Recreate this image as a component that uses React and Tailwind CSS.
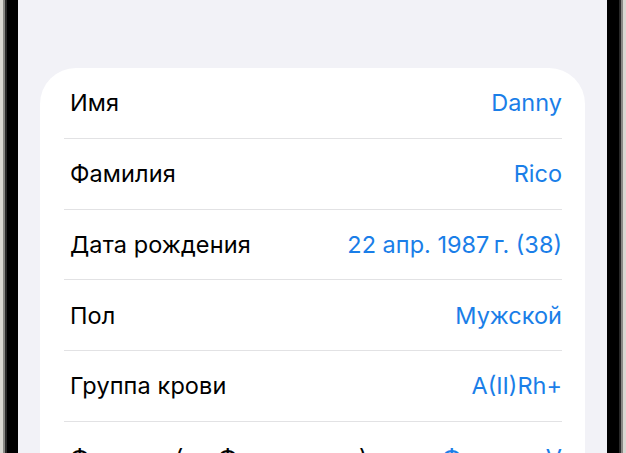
import React from "react";

const rows = [
  ["Имя", "Danny"],
  ["Фамилия", "Rico"],
  ["Дата рождения", "22 апр. 1987\u2009г. (38)"],
  ["Пол", "Мужской"],
  ["Группа крови", "A(II)Rh+"],
  ["Фототип (по Фицпатрику)", "Фототип V"],
];

export default function App() {
  return (
    <div
      className="flex w-[626px] h-[453px] overflow-hidden"
      style={{ fontFamily: "Inter, 'Noto Sans', sans-serif" }}
    >
      <div className="w-[18px] h-full flex shrink-0">
        <div className="w-[3px] bg-[#d9d8d2]" />
        <div className="w-[2px] bg-[#8a8a86]" />
        <div className="w-[2px] bg-[#2a2a2a]" />
        <div className="flex-1 bg-black" />
      </div>
      <div className="flex-1 bg-[#f2f2f7] pt-[68px] px-[22px]">
        <div className="bg-white rounded-[36px] pl-[24px] pr-[23px]">
          {rows.map(([label, value], i) => (
            <div
              key={i}
              className={
                "h-[70.75px] pt-[1px] flex items-center justify-between box-border " +
                (i < rows.length - 1 ? "border-b border-[#e2e2e4]" : "")
              }
            >
              <span className="pl-[6px] text-[23.5px] leading-[28px] text-black whitespace-nowrap tracking-[0.1px]">
                {label}
              </span>
              <span className="text-[23.5px] leading-[28px] text-[#1a7ee8] whitespace-nowrap">
                {value}
              </span>
            </div>
          ))}
        </div>
      </div>
      <div className="w-[19px] h-full flex shrink-0">
        <div className="flex-1 bg-black" />
        <div className="w-[2px] bg-[#2a2a2a]" />
        <div className="w-[2px] bg-[#8a8a86]" />
        <div className="w-[3px] bg-[#d9d8d2]" />
      </div>
    </div>
  );
}
